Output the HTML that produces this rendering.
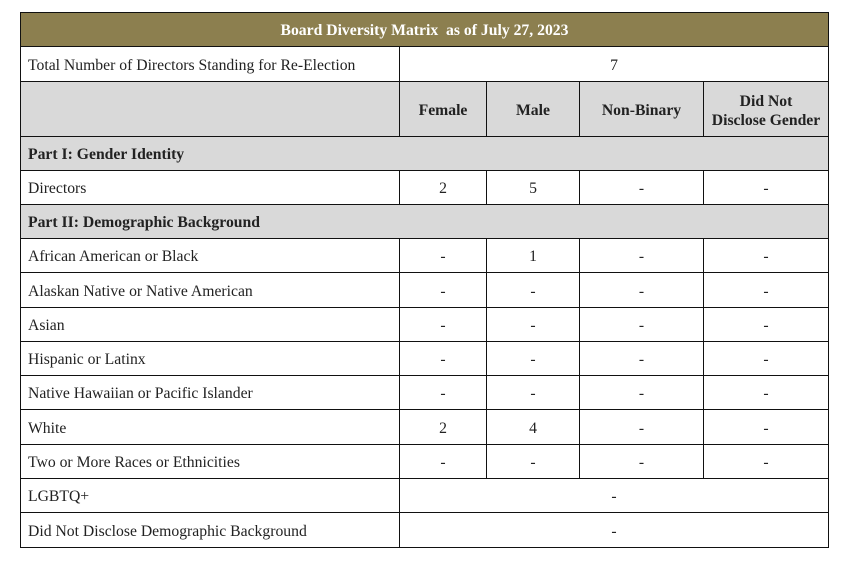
<!DOCTYPE html>
<html><head><style>
body{margin:0;width:853px;height:563px;background:#fff;font-family:"Liberation Serif",serif;color:#222;}
.c{position:absolute;box-sizing:border-box;border:1px solid #111;display:flex;align-items:center;justify-content:center;font-size:15.7px;padding-top:3px;}
.l{justify-content:flex-start;padding-left:7px;}
.g{background:#d9d9d9;}
.b{font-weight:bold;}
</style></head><body>
<div class="c b" style="left:20px;top:12px;width:809px;height:35px;background:#8c7f4f;color:#fff;">Board Diversity Matrix&nbsp; as of July 27, 2023</div>
<div id="t"></div>
<script>
var xs=[20,399,486,579,703,828];
var rows=[
[46,81,"Total Number of Directors Standing for Re-Election","span","7"],
[81,136,"","hdr"],
[136,170,"Part I: Gender Identity","sec"],
[170,204,"Directors","row",["2","5","-","-"]],
[204,238,"Part II: Demographic Background","sec"],
[238,272,"African American or Black","row",["-","1","-","-"]],
[272,307,"Alaskan Native or Native American","row",["-","-","-","-"]],
[307,341,"Asian","row",["-","-","-","-"]],
[341,375,"Hispanic or Latinx","row",["-","-","-","-"]],
[375,409,"Native Hawaiian or Pacific Islander","row",["-","-","-","-"]],
[409,444,"White","row",["2","4","-","-"]],
[444,478,"Two or More Races or Ethnicities","row",["-","-","-","-"]],
[478,512,"LGBTQ+","span","-"],
[512,547,"Did Not Disclose Demographic Background","span","-"]];
var h="";
function cell(x1,x2,y1,y2,txt,cls){h+='<div class="c '+cls+'" style="left:'+x1+'px;top:'+(y1)+'px;width:'+(x2-x1+1)+'px;height:'+(y2-y1+1)+'px">'+txt+'</div>';}
rows.forEach(function(r){
 var y1=r[0],y2=r[1];
 if(r[3]=="sec"){cell(20,828,y1,y2,r[2],"l g b");return;}
 if(r[3]=="hdr"){cell(20,399,y1,y2,"","g");var hd=["Female","Male","Non-Binary","Did Not<br>Disclose Gender"];for(var i=0;i<4;i++)cell(xs[i+1],xs[i+2],y1,y2,'<span style="text-align:center;line-height:19px">'+hd[i]+'</span>',"g b");return;}
 cell(20,399,y1,y2,r[2],"l");
 if(r[3]=="span"){cell(399,828,y1,y2,r[4],"");return;}
 for(var i=0;i<4;i++)cell(xs[i+1],xs[i+2],y1,y2,r[4][i],"");
});
document.getElementById("t").innerHTML=h;
</script>
</body></html>
